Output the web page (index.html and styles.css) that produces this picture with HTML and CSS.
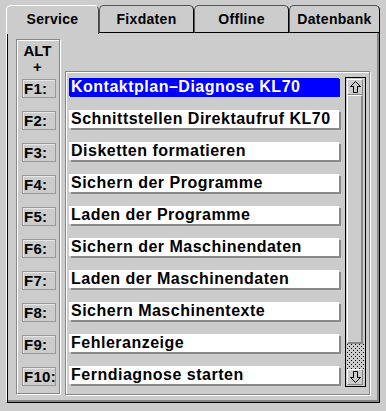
FILE: index.html
```html
<!DOCTYPE html>
<html lang="de">
<head>
    <meta charset="UTF-8">
    <title>Service</title>
    <link rel="stylesheet" href="styles.css">
</head>
<body>

<div class="window">
    <!-- Tab strip -->
    <div class="tabs">
        <div class="tab tab-service active">Service</div>
        <div class="tab tab-fix">Fixdaten</div>
        <div class="tab tab-off">Offline</div>
        <div class="tab tab-db">Datenbank</div>
    </div>

    <div class="panel">
        <div class="keys">
            <div class="keys-head">ALT<br>+</div>
            <div class="key">F1:</div>
            <div class="key">F2:</div>
            <div class="key">F3:</div>
            <div class="key">F4:</div>
            <div class="key">F5:</div>
            <div class="key">F6:</div>
            <div class="key">F7:</div>
            <div class="key">F8:</div>
            <div class="key">F9:</div>
            <div class="key">F10:</div>
        </div>

        <div class="list">
            <div class="items">
                <div class="item selected">Kontaktplan–Diagnose KL70</div>
                <div class="item">Schnittstellen Direktaufruf KL70</div>
                <div class="item">Disketten formatieren</div>
                <div class="item">Sichern der Programme</div>
                <div class="item">Laden der Programme</div>
                <div class="item">Sichern der Maschinendaten</div>
                <div class="item">Laden der Maschinendaten</div>
                <div class="item">Sichern Maschinentexte</div>
                <div class="item">Fehleranzeige</div>
                <div class="item">Ferndiagnose starten</div>
            </div>

            <div class="scrollbar">
                <div class="sb-btn">
                    <svg width="11" height="12" viewBox="0 0 11 12">
                        <polygon points="5.5,0.5 10.5,5.5 7.5,5.5 7.5,11.5 3.5,11.5 3.5,5.5 0.5,5.5" fill="none" stroke="#000" stroke-width="1"/>
                    </svg>
                </div>
                <div class="sb-thumb"></div>
                <div class="sb-track"></div>
                <div class="sb-btn">
                    <svg width="11" height="12" viewBox="0 0 11 12">
                        <polygon points="5.5,11.5 10.5,6.5 7.5,6.5 7.5,0.5 3.5,0.5 3.5,6.5 0.5,6.5" fill="none" stroke="#000" stroke-width="1"/>
                    </svg>
                </div>
            </div>
        </div>
    </div>
</div>

</body>
</html>
```

FILE: styles.css
```css
body {
    margin: 0;
    width: 386px;
    height: 411px;
    background-color: #cccccc;
    font-family: "Liberation Sans", Arial, sans-serif;
    font-weight: bold;
    color: #000;
    overflow: hidden;
}
.window {
    padding: 5px 0 0 6px;
}

/* tabs */
.tabs {
    display: flex;
    height: 28px;
    margin-bottom: -1px;
}
.tab {
    position: relative;
    box-sizing: border-box;
    height: 28px;
    border: 1px solid #555;
    border-right-color: #000;
    border-bottom-color: #000;
    border-radius: 5px 5px 0 0;
    font-size: 14px;
    letter-spacing: 0.3px;
    line-height: 26px;
    text-align: center;
    background-color: #cccccc;
}
.tab.active {
    height: 29px;
    border-color: #fff;
    border-right-color: #444;
    border-bottom: none;
    z-index: 1;
}
.tab-service { width: 93px; }
.tab-fix { width: 95px; }
.tab-off { width: 95px; }
.tab-db { width: 91px; }

/* panel */
.panel {
    box-sizing: border-box;
    width: 374px;
    height: 371px;
    border-top: 1px solid #fff;
    border-left: 1px solid #fff;
    border-right: 1px solid #000;
    border-bottom: 1px solid #000;
    box-shadow: inset 1px 0 0 #000, inset -2px -2px 0 #888;
    padding: 6px 0 0 9px;
    display: flex;
    gap: 5px;
}

/* ALT + F-key column */
.keys {
    box-sizing: border-box;
    width: 44px;
    height: 355px;
    border: 1px solid #888;
    box-shadow: inset 1px 1px 0 #fff, 1px 1px 0 #fff;
    display: flex;
    flex-direction: column;
    gap: 13px;
}
.keys-head {
    box-sizing: border-box;
    height: 26px;
    font-size: 15px;
    line-height: 16px;
    text-align: center;
    padding-top: 3px;
    margin-right: 1px;
}
.key {
    box-sizing: border-box;
    width: 34px;
    height: 19px;
    margin-left: 5px;
    border: 1px solid #999;
    box-shadow: inset 1px 1px 0 #e8e8e8;
    font-size: 15px;
    letter-spacing: 0.3px;
    line-height: 17px;
    padding-left: 1px;
    white-space: nowrap;
}

/* list with scrollbar */
.list {
    box-sizing: border-box;
    width: 305px;
    height: 324px;
    margin-top: 32px;
    border: 1px solid #888;
    box-shadow: inset 1px 1px 0 #fff, 1px 1px 0 #fff;
    padding: 6px 0 0 3px;
    display: flex;
}
.items {
    display: flex;
    flex-direction: column;
    gap: 14px;
}
.item {
    width: 270px;
    height: 18px;
    background: #fff;
    box-shadow: 2px 2px 0 #888;
    font-size: 16px;
    letter-spacing: 0.5px;
    line-height: 18px;
    padding-left: 2px;
    box-sizing: border-box;
    white-space: nowrap;
}
.item.selected {
    background: #0000ff;
    color: #fff;
    box-shadow: 1px 1px 0 #0000ff;
}
.scrollbar {
    box-sizing: border-box;
    width: 21px;
    height: 310px;
    margin: -1px 0 0 6px;
    border: 1px solid #000;
    padding: 1px;
    display: flex;
    flex-direction: column;
}
.sb-btn {
    box-sizing: border-box;
    height: 16px;
    width: 16px;
    border-top: 1px solid #fff;
    border-left: 1px solid #fff;
    border-right: 1px solid #888;
    border-bottom: 1px solid #888;
    display: flex;
    justify-content: center;
    align-items: center;
}
.sb-thumb {
    box-sizing: border-box;
    height: 249px;
    width: 16px;
    border-top: 1px solid #fff;
    border-left: 1px solid #fff;
    border-right: 2px solid #888;
    border-bottom: 2px solid #888;
}
.sb-track {
    height: 25px;
    background-color: #cccccc;
    background-image:
        conic-gradient(at 1px 1px, transparent 75%, #000 0),
        conic-gradient(at 1px 1px, transparent 75%, #000 0);
    background-size: 4px 4px;
    background-position: 0 0, 2px 2px;
}
```
